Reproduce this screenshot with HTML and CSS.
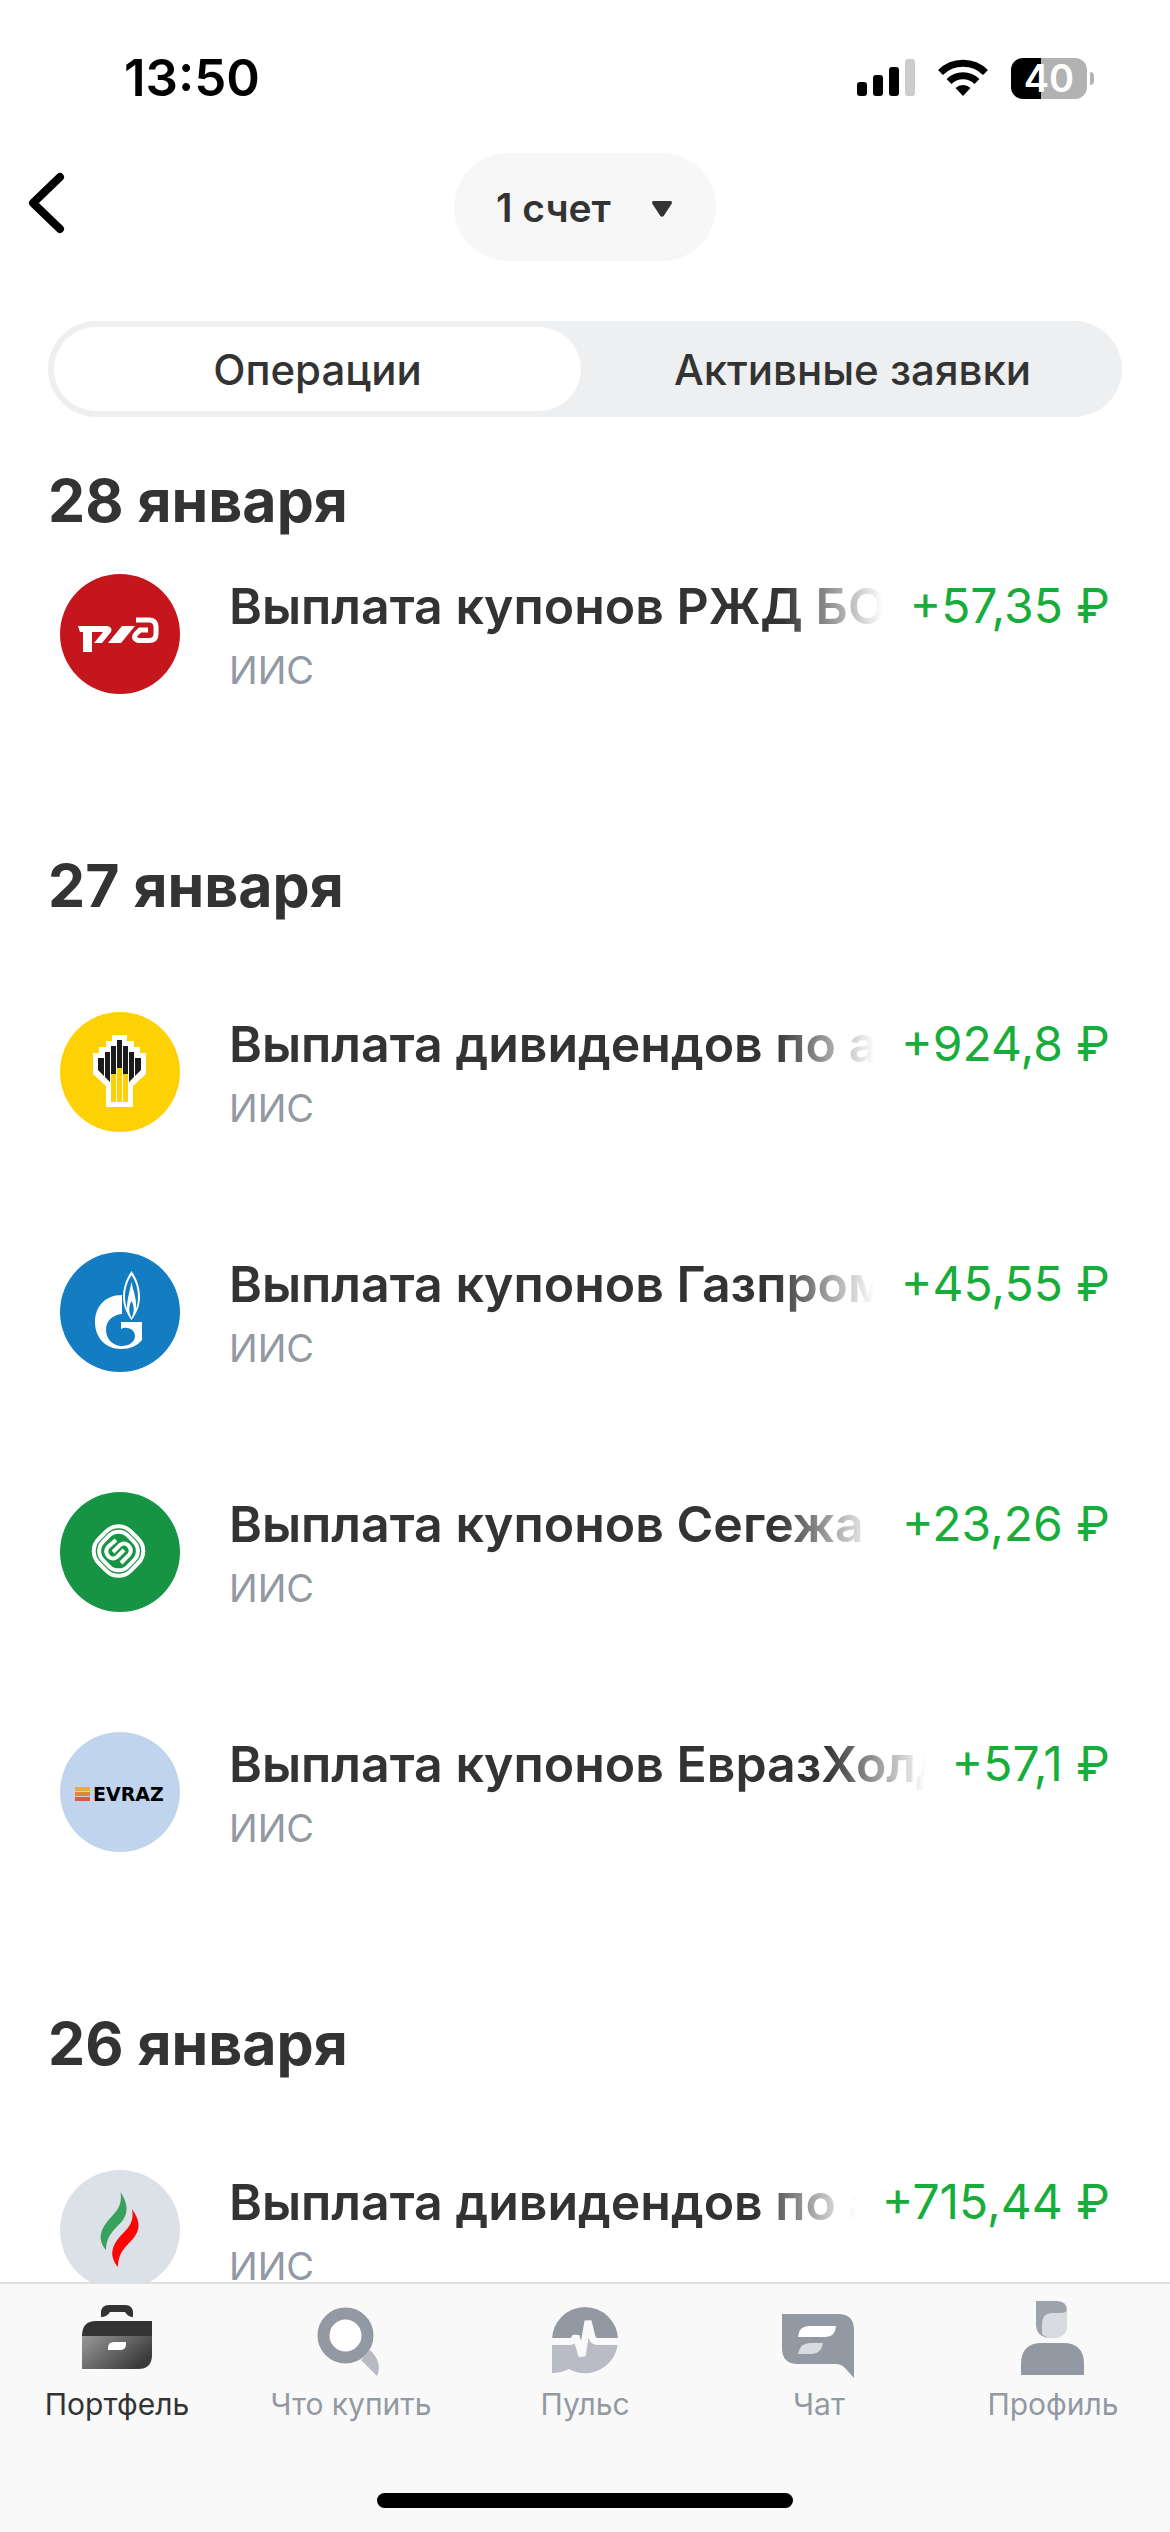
FILE: index.html
```html
<!DOCTYPE html>
<html lang="ru">
<head>
    <meta charset="UTF-8">
    <meta name="viewport" content="width=device-width, initial-scale=1.0">
    <title>Операции</title>
    <link rel="stylesheet" href="styles.css">
</head>
<body>
    <div class="status-bar">
        <span class="time">13:50</span>
        <div class="status-icons">
            <svg width="58" height="38" viewBox="0 0 58 38">
                <rect x="0" y="23" width="10" height="14" rx="3"/>
                <rect x="16" y="16" width="10" height="21" rx="3"/>
                <rect x="32" y="8" width="10" height="29" rx="3"/>
                <rect x="48" y="0" width="10" height="37" rx="3" fill="#ccc"/>
            </svg>
            <svg width="52" height="38" viewBox="0 0 52 38">
                <path d="M3.5 13.5A32 32 0 0 1 48.5 13.5" fill="none" stroke="#000" stroke-width="7"/>
                <path d="M12 22.5A20 20 0 0 1 40 22.5" fill="none" stroke="#000" stroke-width="7"/>
                <path d="M18.5 29A11 11 0 0 1 33.5 29L26 37Z"/>
            </svg>
            <div class="battery"><span class="battery-level">40</span></div>
        </div>
    </div>

    <header class="header">
        <button class="back" type="button" aria-label="Назад">
            <svg width="40" height="64" viewBox="0 0 40 64">
                <path d="M34 6L7 32L34 58" fill="none" stroke="#000" stroke-width="8" stroke-linecap="round" stroke-linejoin="round"/>
            </svg>
        </button>
        <div class="account">
            <select class="account-select" aria-label="Счет">
                <option>1 счет</option>
            </select>
            <svg class="account-arrow" width="22" height="18" viewBox="0 0 22 18">
                <path d="M3 1H19Q22 1 20.5 4L13 15.5Q11 18 9 15.5L1.5 4Q0 1 3 1Z" fill="#333"/>
            </svg>
        </div>
    </header>

    <div class="tabs">
        <button class="tab active" type="button">Операции</button>
        <button class="tab" type="button">Активные заявки</button>
    </div>

    <main class="feed">
        <section class="day pinned">
            <h2>28 января</h2>
            <div class="operation">
                <svg class="logo" viewBox="0 0 120 120">
                    <circle cx="60" cy="60" r="60" fill="#c4161c"/>
                    <g fill="#fff">
                        <path d="M18 52H47Q53 53 51 58L42 69H34L43 58H32V78H23V58H20Z"/>
                        <path d="M48 69L62 52H75L61 69H54L64 57L54 69Z"/>
                    </g>
                    <path d="M76 46H89Q96 46 96 53V60Q96 66.500 89 66.500H79Q72 65 76 60L80 56H88" fill="none" stroke="#fff" stroke-width="5"/>
                </svg>
                <div class="info">
                    <div class="title">Выплата купонов РЖД БО</div>
                    <div class="account-name">ИИС</div>
                </div>
                <div class="amount">+57,35 ₽</div>
            </div>
        </section>

        <section class="day">
            <h2>27 января</h2>
            <div class="operation">
                <svg class="logo" viewBox="0 0 120 120">
                    <circle cx="60" cy="60" r="60" fill="#fed105"/>
                    <path d="M52 23H67V29H74V35H80V41H86V62L73 74V95H46V74L33 62V41H39V35H46V29H52Z" fill="#fff"/>
                    <path d="M57 28H62V56H57ZM51 34H56V62H51ZM63 34H68V62H63ZM45 40H50V70L45 65ZM69 40H74V65L69 70ZM38 46H44V64L38 58ZM75 46H81V58L75 64Z" fill="#1c1b1b"/>
                    <path d="M57 56H62V90H57ZM51 62H56V90H51ZM63 62H68V90H63Z" fill="#fed105"/>
                </svg>
                <div class="info">
                    <div class="title">Выплата дивидендов по а</div>
                    <div class="account-name">ИИС</div>
                </div>
                <div class="amount">+924,8 ₽</div>
            </div>
            <div class="operation">
                <svg class="logo" viewBox="0 0 120 120">
                    <circle cx="60" cy="60" r="60" fill="#147dc1"/>
                    <path d="M62 43C44 43 35 56 35 70C35 86 46 97 61 97C70 97 77 94 82 88V70H61V77C65 74 75 76 75 84C75 90 69 94 62 94C53 94 46 87 46 78C46 69 52 63 62 62Z" fill="#fff"/>
                    <path d="M71.5 19C77 27 80 36 80 45C80 54 76 62 71.5 68C67 62 63 54 63 45C63 36 66 27 71.5 19Z" fill="#fff"/>
                    <path d="M71.5 23C67 30 65 37 65 45C65 50 66 54 67 57C67 46 70 39 71.5 30C73 39 77 46 76 57C77 54 78 50 78 45C78 37 76 30 71.5 23Z" fill="#147dc1"/>
                    <path d="M71.5 49C74 54 75 58 71.5 66C68 58 69 54 71.5 49Z" fill="#147dc1"/>
                </svg>
                <div class="info">
                    <div class="title">Выплата купонов Газпром</div>
                    <div class="account-name">ИИС</div>
                </div>
                <div class="amount">+45,55 ₽</div>
            </div>
            <div class="operation">
                <svg class="logo" viewBox="0 0 120 120">
                    <circle cx="60" cy="60" r="60" fill="#169443"/>
                    <g fill="none" stroke="#fff" stroke-width="4">
                        <rect x="36" y="36.5" width="45" height="45" rx="17" transform="rotate(45 58.5 59)"/>
                        <rect x="41" y="41.5" width="35" height="35" rx="13" transform="rotate(45 58.5 59)"/>
                        <path d="M56 48L48 55Q44 60 49 65Q53 68 57 65L64 58"/>
                        <path d="M61 71L69 63Q73 58 68 53Q64 50 60 53L53 60"/>
                    </g>
                </svg>
                <div class="info">
                    <div class="title">Выплата купонов Сегежа</div>
                    <div class="account-name">ИИС</div>
                </div>
                <div class="amount">+23,26 ₽</div>
            </div>
            <div class="operation">
                <svg class="logo" viewBox="0 0 120 120">
                    <circle cx="60" cy="60" r="60" fill="#c0d5ed"/>
                    <rect x="15" y="55" width="15" height="4" fill="#e9ab48"/>
                    <rect x="15" y="60" width="15" height="4" fill="#e78432"/>
                    <rect x="15" y="65" width="15" height="4" fill="#dc5a38"/>
                    <text class="logo-text" x="33" y="69">EVRAZ</text>
                </svg>
                <div class="info">
                    <div class="title">Выплата купонов ЕвразХолд</div>
                    <div class="account-name">ИИС</div>
                </div>
                <div class="amount">+57,1 ₽</div>
            </div>
        </section>

        <section class="day">
            <h2>26 января</h2>
            <div class="operation">
                <svg class="logo" viewBox="0 0 120 120">
                    <circle cx="60" cy="60" r="60" fill="#dce0e7"/>
                    <path d="M60.5 22C67 32 69 41 63 50C57 58 46 64 46 80C37 69 41 60 47 52C54 43 63 38 60.5 22Z" fill="#38a15b"/>
                    <path d="M72 39C79 49 81 57 75 66C69 75 58 80 58 97C49 86 52 77 58 69C65 60 75 55 72 39Z" fill="#fb0505"/>
                </svg>
                <div class="info">
                    <div class="title">Выплата дивидендов по а</div>
                    <div class="account-name">ИИС</div>
                </div>
                <div class="amount">+715,44 ₽</div>
            </div>
        </section>
    </main>

    <nav class="nav">
        <div class="nav-items">
            <a class="nav-item active" href="#">
                <svg width="84" height="84" viewBox="0 0 84 84">
                    <defs>
                        <linearGradient id="caseGradient" x1="0" y1="0" x2="1" y2="0.6">
                            <stop offset="0" stop-color="#999"/>
                            <stop offset="1" stop-color="#3a3a3a"/>
                        </linearGradient>
                    </defs>
                    <path d="M26 21V17Q26 9 34 9H50Q58 9 58 17V21Q53 21 50 16H35Q32 21 26 21Z" fill="#333"/>
                    <path d="M7 40Q7 25 21 25H77V40Z" fill="#333"/>
                    <path d="M7 40H77V59Q77 73 63 73H7Z" fill="url(#caseGradient)"/>
                    <path d="M33 54V52Q33 46 39 46H51V48Q51 54 45 54Z" fill="#fff"/>
                </svg>
                <span>Портфель</span>
            </a>
            <a class="nav-item" href="#">
                <svg width="84" height="84" viewBox="0 0 84 84">
                    <path d="M52 64L61 54Q74 67 68 80Z" fill="#b7bac3"/>
                    <circle cx="36.5" cy="39.5" r="22" fill="#fff" stroke="#9299a2" stroke-width="12"/>
                </svg>
                <span>Что купить</span>
            </a>
            <a class="nav-item" href="#">
                <svg width="84" height="84" viewBox="0 0 84 84">
                    <path d="M9 44A33 33 0 0 1 75 44Z" fill="#9299a2"/>
                    <path d="M9 44H75A33 33 0 0 1 26 73Q18 77 9 77Z" fill="#b9bbc5"/>
                    <path d="M6 45.5H27Q31 45.5 33 40L39 60L45 25L49 41Q50 45.5 55 45.5H78" fill="none" stroke="#f9f9f9" stroke-width="7" stroke-linejoin="bevel"/>
                </svg>
                <span>Пульс</span>
            </a>
            <a class="nav-item" href="#">
                <svg width="84" height="84" viewBox="0 0 84 84">
                    <path d="M5 18H61Q77 18 77 34V82L68 72Q64 68 59 68H21Q5 68 5 52Z" fill="#9299a2"/>
                    <path d="M21 41Q22 30 32 30H59Q58 41 49 41Z" fill="#fff"/>
                    <path d="M21 58Q23 47 33 47H46Q44 58 35 58Z" fill="#d8dce0"/>
                </svg>
                <span>Чат</span>
            </a>
            <a class="nav-item" href="#">
                <svg width="84" height="84" viewBox="0 0 84 84">
                    <path d="M25 5H46Q56 5 56 15V28Q56 42 41 42Q25 42 25 28Z" fill="#9da3ac"/>
                    <path d="M31 38V28Q31 17 42 17H50Q56 17 56 13V28Q56 42 41 42Q35 42 31 38Z" fill="#d8dce0"/>
                    <path d="M10 79V68Q10 47 31 47H52Q73 47 73 68V79Z" fill="#9299a2"/>
                </svg>
                <span>Профиль</span>
            </a>
        </div>
        <div class="home-indicator"></div>
    </nav>
</body>
</html>
```
FILE: styles.css
```css
* {
    margin: 0;
    padding: 0;
    box-sizing: border-box;
}

body {
    display: flex;
    flex-direction: column;
    height: 100vh;
    overflow: hidden;
    background: #fff;
    color: #333;
    font-family: Inter, 'Liberation Sans', sans-serif;
}

button,
select {
    border: none;
    background: none;
    color: inherit;
    font-family: inherit;
}

/* status bar */
.status-bar {
    display: flex;
    align-items: center;
    justify-content: space-between;
    padding: 48px 76px 45px 124px;
}

.time {
    color: #000;
    font-size: 51px;
    line-height: 60px;
    font-weight: 600;
}

.status-icons {
    display: flex;
    align-items: center;
    gap: 22px;
}

.battery {
    position: relative;
    width: 76px;
    height: 41px;
    margin-right: 7px;
    border-radius: 12px;
    background: linear-gradient(90deg, #000 40%, #b2b2b2 40%);
    color: #fff;
    text-align: center;
}

.battery::after {
    content: '';
    position: absolute;
    top: 14px;
    right: -7px;
    width: 4px;
    height: 13px;
    border-radius: 0 6px 6px 0;
    background: #b2b2b2;
}

.battery-level {
    font-size: 38px;
    line-height: 41px;
    font-weight: 600;
}

/* header */
.header {
    display: grid;
    grid-template-columns: 1fr auto 1fr;
    align-items: center;
    padding: 0 26px;
}

.back {
    justify-self: start;
    height: 72px;
    padding-bottom: 8px;
}

.account {
    position: relative;
}

.account-select {
    appearance: none;
    width: 262px;
    height: 108px;
    padding: 0 42px;
    border-radius: 54px;
    background: #f7f7f7;
    font-size: 39px;
    font-weight: 600;
}

.account-arrow {
    position: absolute;
    top: 47px;
    right: 43px;
    pointer-events: none;
}

/* tabs */
.tabs {
    display: grid;
    grid-template-columns: 1fr 1fr;
    gap: 8px;
    margin: 60px 48px 0;
    padding: 6px;
    border-radius: 48px;
    background: #edeff1;
}

.tab {
    height: 84px;
    border-radius: 42px;
    font-size: 42px;
    font-weight: 500;
}

.tab.active {
    background: #fff;
}

/* operations */
.feed {
    flex: 1;
    min-height: 0;
    overflow: hidden;
}

.day h2 {
    padding: 96px 48px 30px;
    font-size: 59px;
    line-height: 72px;
    font-weight: 700;
}

.day.pinned h2 {
    padding-top: 48px;
    padding-bottom: 0;
}

.operation {
    display: flex;
    align-items: flex-start;
    padding: 60px 60px 52px;
}

.day.pinned .operation {
    padding-top: 37px;
}

.logo {
    flex: none;
    width: 120px;
    height: 120px;
    margin-right: 49px;
}

.logo-text {
    font: bold 19px 'DejaVu Sans', sans-serif;
}

.info {
    flex: 1;
    min-width: 0;
}

.title {
    overflow: hidden;
    font-size: 50px;
    line-height: 64px;
    font-weight: 600;
    white-space: nowrap;
    /* long names fade out before the amount */
    -webkit-mask-image: linear-gradient(270deg, transparent, #000 100px);
    mask-image: linear-gradient(270deg, transparent, #000 100px);
}

.account-name {
    color: #9299a2;
    font-size: 38px;
    line-height: 64px;
}

.amount {
    margin-left: 26px;
    color: #18ad3b;
    font-size: 48px;
    line-height: 64px;
    white-space: nowrap;
}

/* bottom navigation */
.nav {
    border-top: 2px solid #dedfe0;
    background: #f9f9f9;
}

.nav-items {
    display: grid;
    grid-template-columns: repeat(5, 1fr);
    padding-top: 12px;
}

.nav-item {
    display: flex;
    flex-direction: column;
    align-items: center;
    gap: 6px;
    color: #9299a2;
    font-size: 30px;
    line-height: 36px;
    text-decoration: none;
}

.nav-item.active {
    color: #333;
}

.home-indicator {
    width: 416px;
    height: 15px;
    margin: 71px auto 24px;
    border-radius: 8px;
    background: #000;
}
```
